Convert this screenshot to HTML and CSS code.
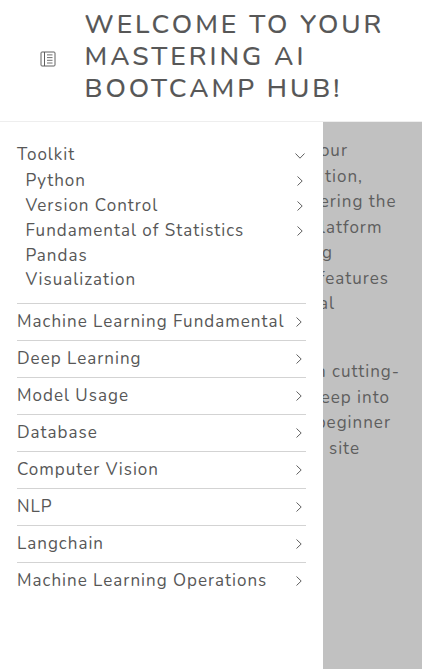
FILE: index.html
```html
<!DOCTYPE html>
<html lang="en">
<head>
<meta charset="utf-8">
<title>Mastering AI Bootcamp Hub</title>
<link rel="stylesheet" href="styles.css">
</head>
<body>
<svg class="symbols" aria-hidden="true">
  <symbol id="chevron" viewBox="0 0 8 12"><path d="M1.5 1.5 6.2 6 1.5 10.5"/></symbol>
</svg>
<header class="header">
  <button class="toggle" aria-label="Menu">
    <svg viewBox="0 0 16 16"><rect x="1" y="1" width="14" height="14" rx="1"/><path d="M4.5 1v14"/><path class="rows" d="M7 3.9h5.5M7 6.6h5.5M7 9.3h5.5M7 12h5.5"/></svg>
  </button>
  <h1 class="title">WELCOME TO YOUR<br>MASTERING AI<br>BOOTCAMP HUB!</h1>
</header>
<main class="main">
  <div class="content">
    <p><span class="c1">your</span><span class="c2">tion,</span><span class="c3">ering the</span><span class="c4">latform</span><span class="c5">g</span><span class="c6">features</span><span class="c7">al</span></p>
    <p><span class="c8">in cutting-</span><span class="c9">eep into</span><span class="c10">beginner</span><span class="c11">site</span></p>
  </div>
  <nav class="drawer">
    <section class="group">
      <a class="item head"><span>Toolkit</span><svg class="chev down"><use href="#chevron"/></svg></a>
      <a class="item sub"><span>Python</span><svg class="chev"><use href="#chevron"/></svg></a>
      <a class="item sub"><span>Version Control</span><svg class="chev"><use href="#chevron"/></svg></a>
      <a class="item sub"><span>Fundamental of Statistics</span><svg class="chev"><use href="#chevron"/></svg></a>
      <a class="item sub"><span>Pandas</span></a>
      <a class="item sub last"><span>Visualization</span></a>
    </section>
    <a class="item row"><span>Machine Learning Fundamental</span><svg class="chev"><use href="#chevron"/></svg></a>
    <a class="item row"><span>Deep Learning</span><svg class="chev"><use href="#chevron"/></svg></a>
    <a class="item row"><span>Model Usage</span><svg class="chev"><use href="#chevron"/></svg></a>
    <a class="item row"><span>Database</span><svg class="chev"><use href="#chevron"/></svg></a>
    <a class="item row"><span>Computer Vision</span><svg class="chev"><use href="#chevron"/></svg></a>
    <a class="item row"><span>NLP</span><svg class="chev"><use href="#chevron"/></svg></a>
    <a class="item row"><span>Langchain</span><svg class="chev"><use href="#chevron"/></svg></a>
    <a class="item row"><span>Machine Learning Operations</span><svg class="chev"><use href="#chevron"/></svg></a>
  </nav>
</main>
</body>
</html>
```
FILE: styles.css
```css
* { box-sizing: border-box; }
body {
  margin: 0;
  height: 669px;
  overflow: hidden;
  display: flex;
  flex-direction: column;
  background: #fff;
  color: #575757;
  font-family: Nunito, Lato, sans-serif;
  font-size: 17px;
  letter-spacing: 1px;
}
.symbols { position: absolute; width: 0; height: 0; }
svg { fill: none; stroke: #606060; }
.header {
  height: 122px;
  flex: none;
  display: flex;
  padding-left: 40px;
  border-bottom: 1px solid #eee;
}
.toggle {
  width: 16px;
  height: 16px;
  margin: 50.5px 28.5px 0 0;
  padding: 0;
  border: 0;
  background: none;
}
.toggle svg { display: block; width: 16px; height: 16px; }
.toggle .rows { stroke-width: 0.9; }
.title {
  margin: 8px 0 0;
  font-size: 26.4px;
  font-weight: 500;
  line-height: 32px;
  letter-spacing: 3px;
  white-space: nowrap;
  -webkit-text-stroke: 0.12px #575757;
}
.main { flex: 1; position: relative; background: #c1c1c1; }
.content { padding-top: 16px; color: #5e5e5e; text-align: right; }
.content p { margin: 0 0 42.5px; line-height: 25.5px; }
.content span { display: block; }
.c1 { padding-right: 74px; }
.c2 { padding-right: 59px; }
.c3 { padding-right: 25.5px; }
.c4 { padding-right: 39.5px; }
.c5 { padding-right: 89px; }
.c6 { padding-right: 33px; }
.c7 { padding-right: 87px; }
.c8 { padding-right: 22px; }
.c9 { padding-right: 32px; }
.c10 { padding-right: 31px; }
.c11 { padding-right: 62px; }
.drawer {
  position: absolute;
  top: 0;
  left: 0;
  bottom: 0;
  width: 323px;
  padding: 19px 17px 0;
  background: #fff;
}
.group { height: 162px; }
.item { display: flex; align-items: center; justify-content: space-between; white-space: nowrap; }
.head { height: 27px; }
.sub { height: 25px; padding-left: 8.5px; }
.last { height: 23px; }
.row { height: 37px; padding-bottom: 2px; border-top: 1px solid #d3d3d3; }
.chev { width: 8px; height: 12px; margin-right: 3px; position: relative; top: 1px; }
.sub .chev { top: 0.4px; margin-right: 2.5px; }
.down { transform: rotate(90deg); margin-right: 2px; }
```
